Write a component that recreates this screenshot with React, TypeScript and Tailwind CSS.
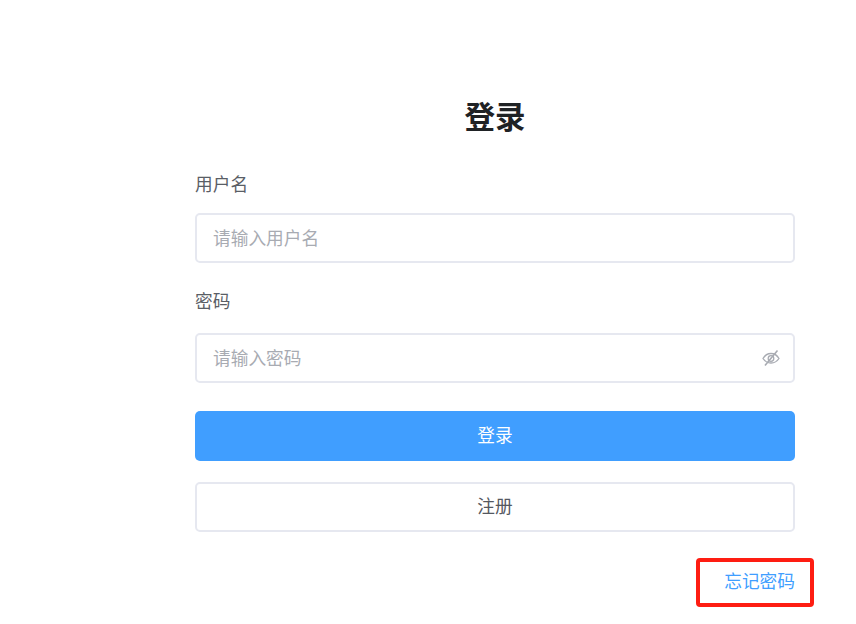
const fontStack = "font-['Liberation_Sans','Noto_Sans_CJK_SC',sans-serif]";

const HideIcon = () => (
  <svg viewBox="0 0 18 18" className="w-[18px] h-[18px] text-[#a8abb2]" fill="none" stroke="currentColor" strokeWidth="1.3">
    <path d="M1 9.500C3 6 5.800 4.500 9 4.500s6 1.500 8 5c-2 3-4.800 4.500-8 4.500s-6-1.500-8-4.500Z" />
    <circle cx="9" cy="9.500" r="2.800" />
    <path d="M15.500 1.500 3 16.500" strokeWidth="1.6" />
  </svg>
);

export default function App() {
  return (
    <div className={`${fontStack} min-h-[624px] w-[856px] bg-white overflow-hidden`}>
      <div className="ml-[195px] w-[600px] pt-[96px]">
        <h1 className="text-center text-[30.5px] leading-[42px] font-bold text-[#1f2225]">登录</h1>

        <label className="block mt-[32px] text-[17.7px] leading-[30px] text-[#5a5e66]">用户名</label>
        <input
          placeholder="请输入用户名"
          className="block mt-[13px] w-full h-[50px] rounded-[5px] border-2 border-[#e6e8f0] px-[16px] pt-[2px] text-[17.7px] outline-none placeholder:text-[#a8abb2]"
        />

        <label className="block mt-[24px] text-[17.7px] leading-[30px] text-[#5a5e66]">密码</label>
        <div className="mt-[16px] relative">
          <input
            placeholder="请输入密码"
            className="block w-full h-[50px] rounded-[5px] border-2 border-[#e6e8f0] px-[16px] pt-[2px] text-[17.7px] outline-none placeholder:text-[#a8abb2]"
          />
          <div className="absolute right-[15px] top-[16px]">
            <HideIcon />
          </div>
        </div>

        <button className="block mt-[28px] w-full h-[50px] rounded-[5px] bg-[#409eff] text-white text-[17.7px]">登录</button>
        <button className="block mt-[21px] w-full h-[50px] rounded-[5px] border-2 border-[#e6e8f0] bg-white text-[#55585f] text-[17.7px]">注册</button>

        <div className="mt-[26px] flex justify-end">
          <a className="relative block text-[17.7px] leading-[49px] text-[#409eff]">
            忘记密码
            <span className="absolute left-[-28px] right-[-19px] top-0 bottom-0 border-4 border-[#fe1d12] rounded-[4px]" />
          </a>
        </div>
      </div>
    </div>
  );
}
